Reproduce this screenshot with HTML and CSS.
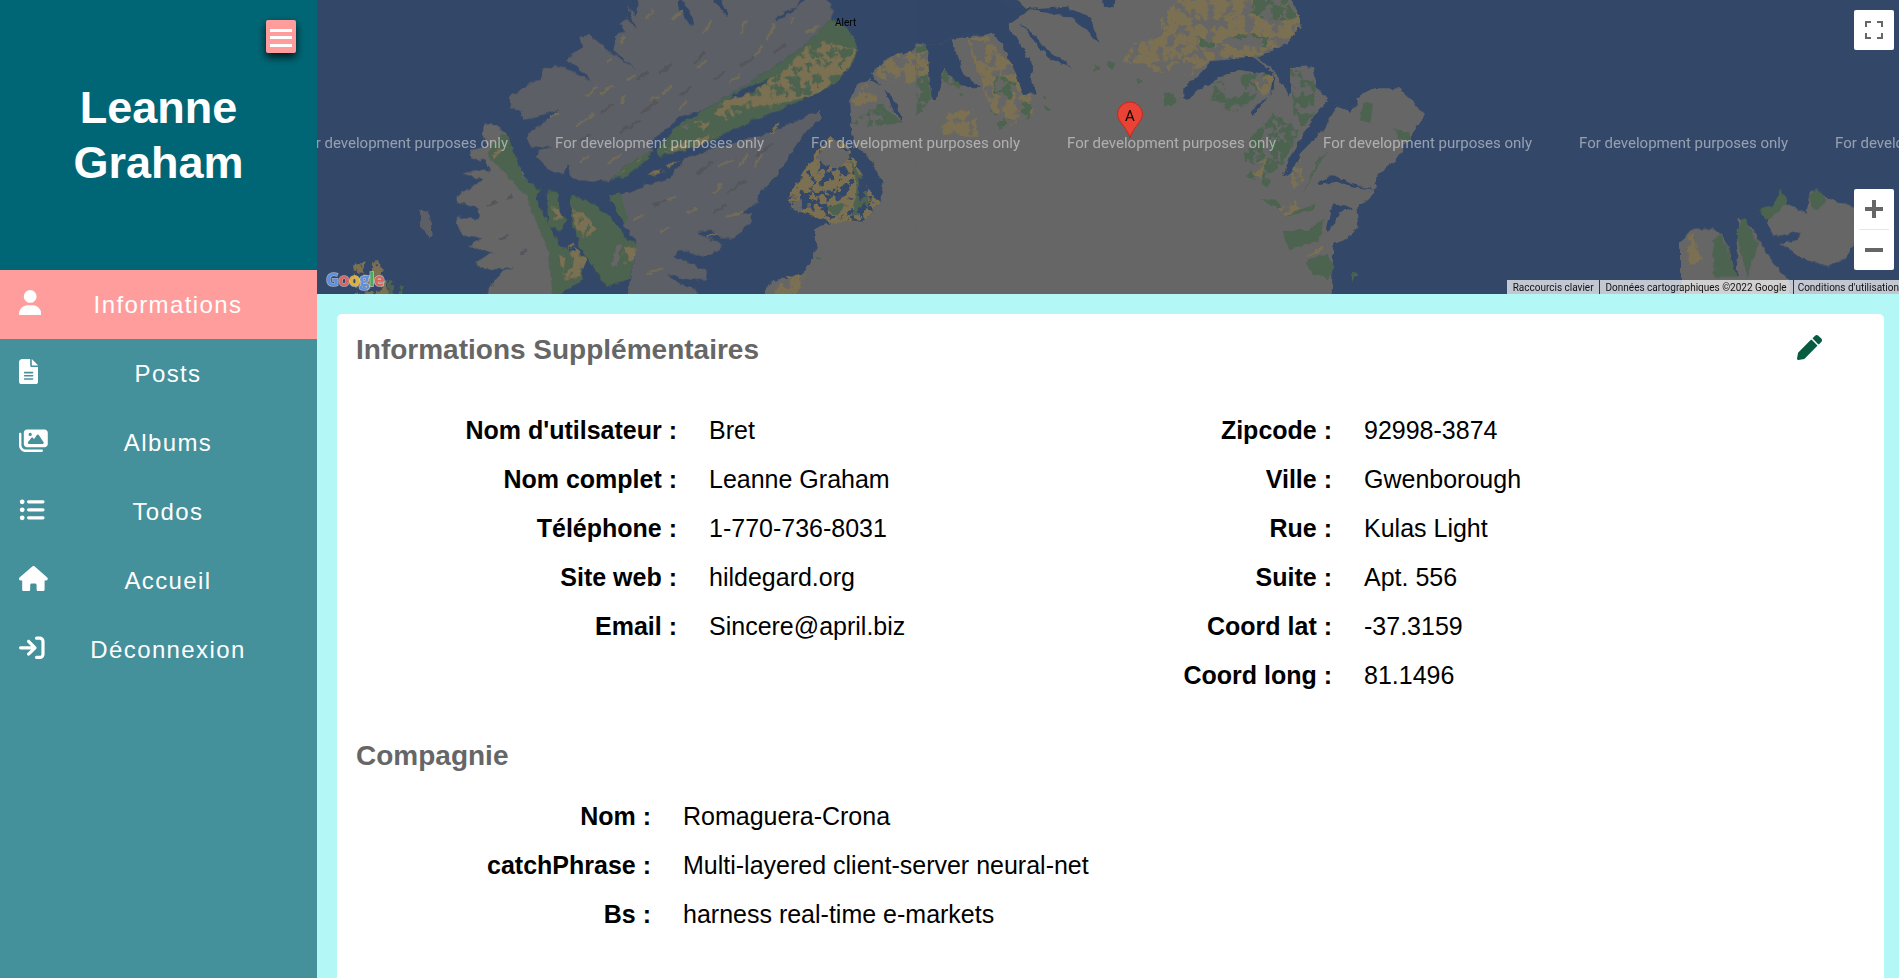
FILE: index.html
```html
<!DOCTYPE html>
<html>
  <head>
    <meta charset="utf-8">
    <title>Leanne Graham</title>
    <link rel="stylesheet" href="styles.css">
  </head>
  <body>
    <div id="page">
      <aside id="sidebar">
        <header id="profile">
          <button id="toggle"><span></span><span></span><span></span></button>
          <h1>Leanne<br>Graham</h1>
        </header>
        <nav>
          <a class="nav-item active">
            <span class="icon"><svg height="25.6" viewBox="0 0 448 512"><path d="M224 256A128 128 0 1 0 224 0a128 128 0 1 0 0 256zm-45.700 48C79.800 304 0 383.800 0 482.300C0 498.700 13.300 512 29.700 512H418.300c16.400 0 29.700-13.300 29.700-29.700C448 383.800 368.200 304 269.700 304H178.300z"/></svg></span>
            <span class="nav-label">Informations</span>
          </a>
          <a class="nav-item">
            <span class="icon"><svg height="25.6" viewBox="0 0 384 512"><path d="M64 0C28.700 0 0 28.700 0 64V448c0 35.300 28.700 64 64 64H320c35.300 0 64-28.700 64-64V160H256c-17.700 0-32-14.300-32-32V0H64zM256 0V128H384L256 0zM112 256H272c8.800 0 16 7.200 16 16s-7.200 16-16 16H112c-8.800 0-16-7.200-16-16s7.200-16 16-16zm0 64H272c8.800 0 16 7.200 16 16s-7.200 16-16 16H112c-8.800 0-16-7.200-16-16s7.200-16 16-16zm0 64H272c8.800 0 16 7.200 16 16s-7.200 16-16 16H112c-8.800 0-16-7.200-16-16s7.200-16 16-16z"/></svg></span>
            <span class="nav-label">Posts</span>
          </a>
          <a class="nav-item">
            <span class="icon"><svg height="25.6" viewBox="0 0 576 512"><path d="M160 32c-35.300 0-64 28.700-64 64V320c0 35.300 28.700 64 64 64H512c35.300 0 64-28.700 64-64V96c0-35.300-28.700-64-64-64H160zM396 138.700l96 144c4.900 7.400 5.400 16.800 1.200 24.600S480.800 320 472 320H328 280 200c-9.200 0-17.600-5.300-21.600-13.600s-2.900-18.200 2.900-25.400l64-80c4.600-5.700 11.400-9 18.700-9s14.200 3.300 18.700 9l17.300 21.600 56-84C360.500 132 368 128 376 128s15.500 4 20 10.700zM192 128a32 32 0 1 1 64 0 32 32 0 1 1 -64 0zM48 120c0-13.300-10.700-24-24-24S0 106.700 0 120V344c0 75.100 60.900 136 136 136H456c13.300 0 24-10.700 24-24s-10.700-24-24-24H136c-48.600 0-88-39.400-88-88V120z"/></svg></span>
            <span class="nav-label">Albums</span>
          </a>
          <a class="nav-item">
            <span class="icon"><svg height="25.6" viewBox="0 0 512 512"><path d="M64 144a48 48 0 1 0 0-96 48 48 0 1 0 0 96zM192 64c-17.700 0-32 14.300-32 32s14.300 32 32 32H480c17.700 0 32-14.300 32-32s-14.300-32-32-32H192zm0 160c-17.700 0-32 14.300-32 32s14.300 32 32 32H480c17.700 0 32-14.300 32-32s-14.300-32-32-32H192zm0 160c-17.700 0-32 14.300-32 32s14.300 32 32 32H480c17.700 0 32-14.300 32-32s-14.300-32-32-32H192zM64 464a48 48 0 1 0 0-96 48 48 0 1 0 0 96zm48-208a48 48 0 1 0 -96 0 48 48 0 1 0 96 0z"/></svg></span>
            <span class="nav-label">Todos</span>
          </a>
          <a class="nav-item">
            <span class="icon"><svg height="25.6" viewBox="0 0 576 512"><path d="M575.800 255.500c0 18-15 32.100-32 32.100h-32l.7 160.200c0 2.700-.2 5.400-.5 8.100V472c0 22.100-17.900 40-40 40H456c-1.100 0-2.200 0-3.300-.1c-1.400 .1-2.800 .1-4.200 .1H416 392c-22.100 0-40-17.900-40-40V448 384c0-17.700-14.300-32-32-32H256c-17.700 0-32 14.300-32 32v64 24c0 22.100-17.900 40-40 40H160 128.100c-1.500 0-3-.1-4.500-.2c-1.200 .1-2.400 .2-3.600 .2H104c-22.100 0-40-17.900-40-40V360c0-.9 0-1.900 .1-2.800V287.600H32c-18 0-32-14-32-32.100c0-9 3-17 10-24L266.400 8c7-7 15-8 22-8s15 2 21 7L564.800 231.500c8 7 12 15 11 24z"/></svg></span>
            <span class="nav-label">Accueil</span>
          </a>
          <a class="nav-item">
            <span class="icon"><svg height="25.6" viewBox="0 0 512 512"><path d="M352 96l64 0c17.700 0 32 14.300 32 32l0 256c0 17.700-14.300 32-32 32l-64 0c-17.700 0-32 14.300-32 32s14.300 32 32 32l64 0c53 0 96-43 96-96l0-256c0-53-43-96-96-96l-64 0c-17.700 0-32 14.300-32 32s14.300 32 32 32zm-9.400 182.600c12.500-12.500 12.500-32.800 0-45.300l-128-128c-12.500-12.500-32.800-12.500-45.300 0s-12.500 32.800 0 45.300L242.700 224 32 224c-17.700 0-32 14.300-32 32s14.300 32 32 32l210.700 0-73.400 73.400c-12.500 12.500-12.500 32.800 0 45.300s32.800 12.500 45.300 0l128-128z"/></svg></span>
            <span class="nav-label">Déconnexion</span>
          </a>
        </nav>
      </aside>

      <main id="main">
        <div id="map">
          <svg id="map_tiles" viewBox="317 0 1582 294" preserveAspectRatio="none">
            <defs>
              <filter id="coast" filterUnits="userSpaceOnUse" x="300" y="-10" width="1620" height="320">
                <feTurbulence type="fractalNoise" baseFrequency="0.14" numOctaves="2" seed="4"/>
                <feDisplacementMap in="SourceGraphic" scale="6" xChannelSelector="R" yChannelSelector="G"/>
              </filter>
              <filter id="mottle" x="-5%" y="-5%" width="110%" height="110%">
                <feTurbulence type="fractalNoise" baseFrequency="0.035" numOctaves="3" seed="9"/>
                <feColorMatrix type="matrix" values="0 0 0 0 0 0 0 0 0 0 0 0 0 0 0 0 0 0 14 -6" result="mask"/>
                <feComposite in="SourceGraphic" in2="mask" operator="in"/>
              </filter>
            </defs>
            <rect x="317" y="0" width="1582" height="294" fill="#334768"/>

            <g filter="url(#coast)">
              <!-- west part, crop coordinates at 3x -->
              <g transform="translate(420 0) scale(.3333)">
                <polygon class="land-dark" points="0,630 25,635 38,700 32,715 0,680"/>
                <polygon class="land-tan" points="-205,790 -130,780 -100,820 -100,900 -190,900"/>
                <polygon class="land-green" points="-95,835 -50,860 -50,900 -100,900"/>

                <polygon class="land-dark" points="620,15 650,50 660,-20 1200,-20 1235,20 1235,55 1160,130 1040,215 920,290 850,330 780,350 720,400 690,430 700,450 630,490 570,540 540,545 480,545 445,520 450,470 490,430 430,520 400,520 350,470 355,450 400,440 330,440 320,410 340,390 380,360 420,330 350,350 310,360 300,330 270,320 270,290 330,250 360,235 370,205 410,195 450,210 510,240 490,215 440,180 470,155 490,140 480,110 510,105 540,130 570,160 600,175 650,210 580,150 590,100 620,95 600,70 620,55 650,85"/>
                <polygon class="land-water" points="780,-20 825,70 810,75 775,20"/>
                <polygon class="land-water" points="890,-20 925,40 915,45 880,0"/>
                <polygon class="land-water" points="1060,55 1130,20 1150,-20 1170,-20 1110,40 1070,60"/>
                <polygon class="land-solid-green" points="1235,55 1280,85 1315,140 1300,190 1240,255 1180,285 1100,320 1000,360 900,410 800,450 720,470 710,450 780,370 850,330 920,290 1040,215 1160,130"/>
                <polygon class="land-tan" points="1160,140 1230,120 1310,150 1290,200 1240,250 1170,290 1120,300 1060,320 1000,320 920,360 880,340 900,310 1040,240 1090,210"/>
                <polygon class="land-water" points="920,300 960,270 1050,235 1000,275"/>
                <polygon class="land-tan" points="820,360 870,365 850,395"/>
                <polygon class="land" points="780,375 810,375 800,390"/>
                <polygon class="land-tan" points="730,460 800,420 900,400 830,440"/>

                <polygon class="land-dark" points="1200,332 1200,360 1150,400 1110,470 1050,550 1010,590 1015,610 960,640 1000,640 990,670 940,715 905,715 870,685 830,700 905,730 900,750 850,770 780,750 760,770 860,810 860,835 800,840 740,820 770,850 830,870 830,900 620,900 650,730 610,670 590,590 680,555 750,535 790,480 830,460 1030,405"/>
                <polygon class="land-tan" points="680,525 750,490 780,480 740,510 700,530"/>
                <polygon class="land-solid-green" points="570,540 640,480 700,450 680,480 620,530"/>
                <polygon class="land-tan" points="590,525 640,490 670,470 630,510"/>

                <polygon class="land" points="190,375 225,370 260,400 285,470 330,560 360,640 400,780 400,900 190,900 240,815 280,800 215,810 165,790 210,760 225,760 145,740 185,715 130,710 105,650 180,655 175,625 110,605 110,585 130,575 190,540 130,520 170,510 210,510 195,480 155,480 150,450 200,440 190,400"/>
                <polygon class="land-solid-green" points="250,400 265,410 310,530 360,570 350,600 420,740 500,770 480,850 420,880 400,900 385,760 340,640 320,590 205,470 210,440"/>
                <polygon class="land-tan" points="205,450 250,445 225,475"/>
                <polygon class="land-solid-green" points="380,575 415,575 420,640 440,660 420,690 385,680"/>
                <polygon class="land-tan" points="385,620 415,625 430,660 395,660"/>
                <polygon class="land-solid-green" points="450,590 500,600 560,640 600,690 620,720 650,730 630,840 560,860 520,800 480,740 460,680"/>
                <polygon class="land-tan" points="455,620 490,640 530,690 490,720 470,690"/>
                <polygon class="land" points="590,730 605,735 590,800 575,800"/>
                <polygon class="land-tan" points="610,740 650,740 640,780 610,790"/>
                <polygon class="land-tan" points="420,760 460,730 500,780 480,830 430,840"/>
                <polygon class="land-solid-green" points="570,585 600,580 625,660 610,670"/>

                <polygon class="land" points="1020,900 1060,840 1140,830 1170,790 1190,740 1185,690 1210,670 1340,660 1380,605 1390,550 1340,460 1300,440 1295,380 1290,290 1310,255 1350,235 1390,260 1420,330 1450,370 1430,310 1370,240 1350,220 1410,170 1510,140 1510,900"/>
                <polygon class="land-tan" points="1105,590 1170,480 1230,410 1280,430 1300,470 1340,560 1380,605 1340,660 1240,670 1190,650 1110,620"/>
                <polygon class="land" points="1190,470 1240,415 1290,470 1250,510 1210,490"/>
                <polygon class="land-green" points="1290,480 1330,540 1350,620 1300,650 1310,560"/>
                <polygon class="land" points="1110,610 1150,600 1140,640"/>
                <polygon class="land-green" points="1210,620 1280,610 1250,650"/>
                <polygon class="land-tan" points="1350,220 1420,170 1510,140 1510,240 1420,250"/>
                <polygon class="land-tan" points="1295,280 1340,250 1380,300 1300,320"/>
                <polygon class="land-green" points="1295,370 1380,310 1450,370 1340,380"/>
                <polygon class="land-tan" points="1050,900 1100,825 1155,830 1120,900"/>
                <polygon class="land-green" points="1185,770 1205,775 1190,785"/>

                <path class="streak-tan" d="M600 130l15-25M680 60l20-30M760 60l25-30M850 100l25-35M960 100l20-40M1040 120l25-50M1110 70l15-20M1160 100l40-25M560 190l15-15M620 240l25-15M500 290l35-30M540 280l40-20M600 310l15-25M730 280l25-25M780 330l20-30M860 180l-25 25M930 250l30-25M1000 170l30-30M470 380l50-40M390 350l25-10M690 300l30-10M480 490l30-25M560 490l45-30M890 500l50-20M960 500l20-40M1050 400l30-30M740 600l30-10M880 580l25-30M1000 500l30-40M640 660l30-15M800 640l30-10M920 650l50-15M720 700l30-20M860 710l30-10M680 820l50-15"/>
                <path class="streak-dark" d="M650 240l35-25M720 220l40-30M820 190l30-30M880 240l35-25M960 200l40-30M1060 160l35-25M540 340l40-25M660 340l50-35M780 290l35-30M600 400l60-40M480 420l30-15M830 520l50-35M920 580l60-40M1010 470l50-40M700 620l40-20M880 640l40-25M200 620l30-15M260 600l20-15M240 720l25-15M300 760l20-15"/>
              </g>

              <!-- east part -->
              <g transform="translate(920 0) scale(.3333)">
                <polygon class="land" points="-10,130 230,100 330,30 480,-20 1110,-20 1145,75 1100,130 1010,170 1065,215 1110,290 1110,205 1180,198 1190,260 1230,310 1290,340 1310,290 1360,265 1440,265 1518,345 1470,410 1430,480 1370,525 1365,580 1310,625 1315,680 1280,715 1240,730 1235,900 -10,900"/>
                <polygon class="land-tan" points="610,190 640,130 720,110 720,60 790,-20 1110,-20 1145,75 1100,130 1000,170 880,175 820,220 760,240 700,210 660,190"/>
                <polygon class="land-green" points="920,115 980,100 1050,115 1040,140 990,130"/>
                <polygon class="land-green" points="840,115 885,130 880,150 840,135"/>
                <polygon class="land-green" points="1000,-20 1110,-20 1130,50 1060,70 990,40"/>
                <polygon class="land" points="660,60 710,60 710,105 665,100"/>
                <polygon class="land" points="760,190 830,190 780,240 730,240"/>
                <polygon class="land-green" points="1110,210 1180,198 1188,260 1180,350 1120,400 1120,290"/>
                <polygon class="land" points="1140,200 1180,200 1185,240 1150,240"/>
                <polygon class="land-green" points="880,250 960,225 1060,220 1010,290 950,340 870,300"/>
                <polygon class="land" points="905,230 950,220 975,270 920,300"/>
                <polygon class="land-tan" points="1000,240 1060,220 1060,270 1020,290"/>
                <polygon class="land-green" points="970,440 1060,340 1140,380 1100,470 1040,560 980,530"/>
                <polygon class="land-tan" points="985,500 1040,470 1060,420 1020,540"/>
                <polygon class="land-tan" points="1110,520 1140,470 1150,540 1120,570"/>
                <polygon class="land-green" points="-10,130 25,135 45,280 -10,350"/>
                <polygon class="land-tan" points="-10,160 25,150 35,225 -10,230"/>
                <polygon class="land-green" points="60,150 90,150 120,230 140,300 60,230"/>
                <polygon class="land-tan" points="140,110 200,110 250,170 300,210 330,285 340,350 300,370 240,380 200,300"/>
                <polygon class="land" points="150,120 190,120 200,170 165,170"/>
                <polygon class="land-tan" points="60,340 160,330 180,410 70,410"/>
                <polygon class="land" points="85,300 160,270 165,330 90,330"/>
                <polygon class="land-green" points="210,330 280,360 240,390"/>
                <polygon class="land-green" points="300,300 335,310 330,360 295,370"/>
                <polygon class="land-green" points="230,220 290,250 270,300 220,280"/>

                <polygon class="land-water" points="-10,-20 270,-20 230,15 320,30 440,20 510,50 535,130 490,80 445,50 330,30 280,60 260,70 225,100 125,100 70,130 20,135 -10,130"/>
                <polygon class="land" points="270,-20 470,-20 460,12 320,25"/>
                <polygon class="land-water" points="125,100 95,120 130,220 180,260 140,265 70,210 50,300 35,300 20,135 70,130"/>
                <polygon class="land-water" points="225,100 260,70 300,130 340,200 330,230 350,280 310,285 280,200"/>
                <polygon class="land-water" points="300,70 340,100 380,150 440,190 460,210 440,195 385,175 340,120"/>
                <polygon class="land-water" points="550,-20 585,-20 580,25 555,20"/>
                <polygon class="land-water" points="790,295 790,265 830,230 880,180 1000,170 1060,220 1065,265 1000,345 995,330 1050,285 1060,225 960,210 890,235 820,285 805,300"/>
                <polygon class="land-water" points="1090,530 1110,470 1190,340 1225,300 1250,320 1210,390 1150,450 1120,510"/>
                <polygon class="land-water" points="1285,285 1310,285 1310,320 1295,315"/>
                <polygon class="land-water" points="1195,545 1240,525 1290,550 1370,570 1300,560 1250,545 1200,555"/>
                <polygon class="land-water" points="1215,690 1240,610 1300,625 1260,640 1225,700"/>

                <polygon class="land-solid-green" points="525,190 540,205 520,215"/>
                <polygon class="land-solid-green" points="560,190 585,190 575,210"/>
                <polygon class="land-solid-green" points="365,285 378,290 370,297"/>
                <polygon class="land-solid-green" points="375,310 388,330 378,330"/>
                <polygon class="land-solid-green" points="650,235 670,245 655,250"/>
                <polygon class="land-green" points="730,280 760,275 770,300 735,335"/>
                <polygon class="land-solid-green" points="1085,690 1160,690 1210,660 1200,720 1110,750"/>
                <polygon class="land-solid-green" points="1155,785 1220,760 1240,800 1225,840 1180,820"/>
                <polygon class="land-tan" points="1150,770 1210,740 1200,760"/>
                <polygon class="land-solid-green" points="1300,815 1312,815 1298,850"/>
                <polygon class="land-solid-green" points="1195,480 1220,450 1150,580"/>
                <polygon class="land-green" points="1020,600 1060,590 1090,630"/>
                <polygon class="land-tan" points="1075,625 1130,600 1140,630 1090,650"/>
                <polygon class="land-solid-green" points="1090,650 1190,610 1180,630"/>
                <polygon class="land-solid-green" points="1420,385 1465,400 1470,420 1440,415"/>
                <polygon class="land-solid-green" points="1330,310 1360,310 1350,370 1320,360"/>
              </g>

              <!-- islands behind the zoom buttons -->
              <g transform="translate(1480 0) scale(.3333)">
                <polygon class="land" points="860,670 900,600 980,640 990,570 1060,600 1125,620 1125,720 1100,770 1040,800 960,770 900,730 950,720 965,695 880,710"/>
                <polygon class="land-solid-green" points="835,625 880,620 900,570 925,600 880,650 860,660"/>
                <polygon class="land-solid-green" points="985,590 1015,565 1040,610 1000,630"/>
                <polygon class="land" points="600,730 630,690 700,685 730,700 770,830 775,650 825,690 840,730 900,810 930,840 930,900 600,900"/>
                <polygon class="land-tan" points="615,695 640,700 665,780 630,795"/>
                <polygon class="land-solid-green" points="700,720 725,700 770,830 700,830"/>
                <polygon class="land-solid-green" points="770,690 790,650 835,730 800,830"/>
              </g>
            </g>

            <g class="watermark">
              <text x="299" y="148">For development purposes only</text>
              <text x="555" y="148">For development purposes only</text>
              <text x="811" y="148">For development purposes only</text>
              <text x="1067" y="148">For development purposes only</text>
              <text x="1323" y="148">For development purposes only</text>
              <text x="1579" y="148">For development purposes only</text>
              <text x="1835" y="148">For development purposes only</text>
            </g>

            <text class="town" x="835" y="26">Alert</text>

            <path class="pin" d="M1130 138c-2-9-12.500-17-12.500-23.500a12.500 12.500 0 0 1 25 0c0 6.500-10.500 14.500-12.500 23.500z"/>
            <text class="pin-letter" x="1130" y="121">A</text>

            <text class="google" x="326" y="286"><tspan fill="#5b8fe6">G</tspan><tspan fill="#e0605a">o</tspan><tspan fill="#e0b030">o</tspan><tspan fill="#5b8fe6">g</tspan><tspan fill="#4ea862">l</tspan><tspan fill="#e0605a">e</tspan></text>
          </svg>

          <button class="map-btn" id="fullscreen">
            <svg viewBox="0 0 18 18"><path d="M1 6V1h5M12 1h5v5M17 12v5h-5M6 17H1v-5"/></svg>
          </button>
          <div id="zoom">
            <button class="zoom-btn"><svg viewBox="0 0 18 18"><path d="M0 9h18M9 0v18"/></svg></button>
            <button class="zoom-btn"><svg viewBox="0 0 18 18"><path d="M0 9h18"/></svg></button>
          </div>
          <div id="attribution">
            <span>Raccourcis clavier</span>
            <span>Données cartographiques ©2022 Google</span>
            <span>Conditions d'utilisation</span>
          </div>
        </div>

        <section id="card">
          <div class="card-head">
            <h2>Informations Supplémentaires</h2>
            <svg id="edit" viewBox="0 0 512 512"><path d="M497.900 142.100l-46.100 46.100c-4.700 4.700-12.300 4.700-17 0l-111-111c-4.700-4.700-4.700-12.300 0-17l46.100-46.100c18.700-18.700 49.100-18.700 67.900 0l60.100 60.100c18.800 18.700 18.800 49.100 0 67.900zM284.200 99.800L21.600 362.400.4 483.900c-2.900 16.400 11.400 30.600 27.800 27.800l121.500-21.300 262.600-262.600c4.700-4.700 4.700-12.300 0-17l-111-111c-4.800-4.700-12.400-4.700-17.100 0z"/></svg>
          </div>

          <div class="columns">
            <dl class="rows">
              <div class="row"><dt>Nom d'utilsateur :</dt><dd>Bret</dd></div>
              <div class="row"><dt>Nom complet :</dt><dd>Leanne Graham</dd></div>
              <div class="row"><dt>Téléphone :</dt><dd>1-770-736-8031</dd></div>
              <div class="row"><dt>Site web :</dt><dd>hildegard.org</dd></div>
              <div class="row"><dt>Email :</dt><dd>Sincere@april.biz</dd></div>
            </dl>
            <dl class="rows">
              <div class="row"><dt>Zipcode :</dt><dd>92998-3874</dd></div>
              <div class="row"><dt>Ville :</dt><dd>Gwenborough</dd></div>
              <div class="row"><dt>Rue :</dt><dd>Kulas Light</dd></div>
              <div class="row"><dt>Suite :</dt><dd>Apt. 556</dd></div>
              <div class="row"><dt>Coord lat :</dt><dd>-37.3159</dd></div>
              <div class="row"><dt>Coord long :</dt><dd>81.1496</dd></div>
            </dl>
          </div>

          <h2 class="company-title">Compagnie</h2>
          <dl class="rows company">
            <div class="row"><dt>Nom :</dt><dd>Romaguera-Crona</dd></div>
            <div class="row"><dt>catchPhrase :</dt><dd>Multi-layered client-server neural-net</dd></div>
            <div class="row"><dt>Bs :</dt><dd>harness real-time e-markets</dd></div>
          </dl>
        </section>
      </main>
    </div>
  </body>
</html>
```

FILE: styles.css
```css
* {
  box-sizing: border-box;
}

body {
  margin: 0;
  font-family: "Liberation Sans", Arial, sans-serif;
  overflow: hidden;
}

#page {
  display: flex;
  height: 100vh;
}

/* sidebar */
#sidebar {
  width: 317px;
  flex-shrink: 0;
  background: #44909b;
  color: white;
}

#profile {
  position: relative;
  height: 270px;
  background: #006675;
  padding-top: 80px;
}

#profile h1 {
  margin: 0;
  font-size: 45px;
  line-height: 55px;
  text-align: center;
}

#toggle {
  position: absolute;
  top: 20px;
  left: 266px;
  width: 30px;
  height: 33px;
  padding: 7px 4px 0;
  border: 0;
  border-radius: 2px;
  background: #ff9d9d;
  box-shadow: 0 4px 8px rgba(0, 0, 0, 0.8);
}

#toggle span {
  display: block;
  height: 3px;
  margin-bottom: 4.5px;
  background: white;
}

.nav-item {
  display: flex;
  align-items: center;
  height: 69px;
  padding: 0 30px 0 19px;
  font-size: 24px;
  letter-spacing: 1.4px;
}

.nav-item.active {
  background: #ff9d9d;
}

.icon {
  display: block;
  width: 30px;
  height: 26px;
  margin-top: -4px;
  flex-shrink: 0;
  fill: white;
}

.nav-label {
  flex: 1;
  text-align: center;
}

/* map */
#main {
  flex: 1;
  display: flex;
  flex-direction: column;
  background: #b3f7f7;
  min-width: 0;
}

#map {
  position: relative;
  height: 294px;
  flex-shrink: 0;
  overflow: hidden;
}

#map_tiles {
  display: block;
  width: 100%;
  height: 100%;
}

.land { fill: #666666; }
.land-dark { fill: #5d5f66; }
.land-solid-green { fill: #4b6350; }
.land-water { fill: #334768; }

.land-green {
  fill: #4b6350;
  filter: url(#mottle);
}

.land-tan {
  fill: #7b7052;
  filter: url(#mottle);
}

.streak-tan {
  fill: none;
  stroke: #716c58;
  stroke-width: 7;
}

.streak-dark {
  fill: none;
  stroke: #55565c;
  stroke-width: 8;
}

.watermark text {
  font-family: Roboto, sans-serif;
  font-size: 15px;
  fill: rgba(255, 255, 255, 0.48);
}

.town {
  font-family: Roboto, sans-serif;
  font-size: 10px;
  fill: black;
}

.pin {
  fill: #ea4335;
  stroke: #c5281c;
}

.pin-letter {
  font-family: Roboto, sans-serif;
  font-size: 15px;
  text-anchor: middle;
  fill: black;
}

.google {
  font-family: "Open Sans", sans-serif;
  font-size: 18px;
  font-weight: 700;
  letter-spacing: -0.6px;
  stroke: rgba(255, 255, 255, 0.55);
  stroke-width: 1.5px;
  paint-order: stroke;
}

.map-btn,
#zoom {
  position: absolute;
  right: 5px;
  width: 40px;
  background: white;
  border-radius: 2px;
}

#fullscreen {
  top: 10px;
  height: 40px;
  border: 0;
  padding: 11px;
}

#fullscreen svg,
.zoom-btn svg {
  display: block;
  width: 18px;
  height: 18px;
  fill: none;
  stroke: #666666;
}

#fullscreen svg {
  stroke-width: 2;
}

#zoom {
  top: 189px;
  height: 81px;
}

.zoom-btn {
  display: block;
  width: 30px;
  height: 40px;
  margin: 0 5px;
  padding: 11px 6px;
  border: 0;
  background: none;
}

.zoom-btn:first-child {
  height: 41px;
  border-bottom: 1px solid #e6e6e6;
}

.zoom-btn svg {
  stroke-width: 4;
}

#attribution {
  position: absolute;
  right: 0;
  bottom: 0;
  display: flex;
  height: 14px;
  font-family: Roboto, sans-serif;
  font-size: 10px;
  line-height: 16px;
  color: #111;
}

#attribution span {
  padding: 0 6px;
  background: rgba(255, 255, 255, 0.7);
  border-left: 1px solid #333;
  white-space: nowrap;
}

#attribution span:first-child {
  padding-right: 5px;
  border-left: 0;
}

#attribution span:last-child {
  padding: 0 0 0 4px;
}

/* card */
#card {
  flex: 1;
  margin: 20px 15px 0 20px;
  padding: 19px 20px 0 19px;
  background: white;
  border-radius: 5px 5px 0 0;
}

.card-head {
  display: flex;
  justify-content: space-between;
  height: 34px;
}

h2 {
  margin: 0;
  font-size: 28px;
  line-height: 34px;
  color: #666666;
}

#edit {
  width: 25px;
  height: 25px;
  margin: 2px 42px 0 0;
  fill: #055c40;
}

.columns {
  display: flex;
  margin-top: 39px;
}

.rows {
  width: 655px;
  margin: 0;
}

.row {
  display: flex;
  height: 49px;
  font-size: 25px;
  line-height: 49px;
  color: black;
  white-space: nowrap;
}

dt {
  width: 321px;
  flex-shrink: 0;
  font-weight: 700;
  text-align: right;
}

dd {
  margin: 0 0 0 32px;
}

.company-title {
  margin-top: 39px;
}

.company {
  width: auto;
  margin-top: 19px;
}

.company dt {
  width: 295px;
}
```
